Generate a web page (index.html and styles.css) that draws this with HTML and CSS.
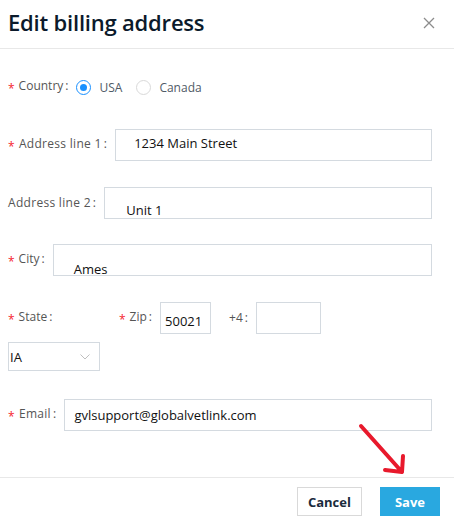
FILE: index.html
```html
<!DOCTYPE html>
<html lang="en">
<head>
  <meta charset="UTF-8">
  <title>Edit billing address</title>
  <link rel="stylesheet" href="styles.css">
</head>
<body>
  <div class="modal">
    <div class="modal-header">
      <h1 class="modal-title">Edit billing address</h1>
      <button class="close-btn" aria-label="Close">
        <svg width="12" height="12" viewBox="0 0 12 12">
          <path d="M1 1 L11 11 M11 1 L1 11" stroke="#8c8c8c" stroke-width="1.3" fill="none"/>
        </svg>
      </button>
    </div>

    <form class="modal-body">
      <div class="form-row">
        <label class="form-label required">Country</label>
        <div class="radio-group">
          <label class="radio checked"><span class="radio-dot"></span>USA</label>
          <label class="radio"><span class="radio-dot"></span>Canada</label>
        </div>
      </div>

      <div class="form-row">
        <label class="form-label label-wide required">Address line 1</label>
        <div class="field field-street">1234 Main Street</div>
      </div>

      <div class="form-row row-tight">
        <label class="form-label label-wide">Address line 2</label>
        <div class="field field-unit">Unit 1</div>
      </div>

      <div class="form-row">
        <label class="form-label required">City</label>
        <div class="field field-city">Ames</div>
      </div>

      <div class="state-row">
        <div class="state-group">
          <div class="label-box"><label class="form-label required">State</label></div>
          <div class="select">
            <span>IA</span>
            <svg width="10" height="6" viewBox="0 0 10 6">
              <path d="M0.5 0.5 L5 5 L9.5 0.5" stroke="#bfbfbf" stroke-width="1" fill="none"/>
            </svg>
          </div>
        </div>
        <div class="zip-group">
          <label class="form-label required">Zip</label>
          <div class="field field-zip">50021</div>
          <label class="form-label plus4-label">+4</label>
          <div class="field field-plus4"></div>
        </div>
      </div>

      <div class="form-row row-last">
        <label class="form-label label-wide required">Email</label>
        <div class="field field-email">gvlsupport@globalvetlink.com</div>
      </div>
    </form>

    <div class="modal-footer">
      <button class="btn btn-cancel">Cancel</button>
      <button class="btn btn-save">Save</button>
    </div>

    <!-- annotation arrow -->
    <svg class="arrow" width="60" height="62" viewBox="0 0 60 62">
      <path d="M6 6 L47 52 M30 50 L47 52 L48 36" stroke="#e8192c" stroke-width="4" stroke-linecap="round" stroke-linejoin="round" fill="none"/>
    </svg>
  </div>
</body>
</html>
```

FILE: styles.css
```css
* {
  box-sizing: border-box;
}
body {
  margin: 0;
  background: #fff;
  font-family: "Open Sans", Arial, sans-serif;
  font-size: 12px;
  color: #555;
}
.modal {
  width: 454px;
  position: relative;
}
.modal-header {
  height: 49px;
  border-bottom: 1px solid #e8e8e8;
  display: flex;
  justify-content: space-between;
  align-items: flex-start;
  padding: 7px 19px 0 8px;
}
.modal-title {
  margin: 0;
  font-size: 22px;
  line-height: 30px;
  font-weight: 600;
  letter-spacing: -0.2px;
  color: #0b1a2b;
}
.close-btn {
  display: block;
  width: 12px;
  height: 12px;
  margin-top: 10px;
  padding: 0;
  border: none;
  background: none;
  cursor: pointer;
}
.close-btn svg {
  display: block;
}
.modal-body {
  padding: 22px 22px 46px 8px;
}
.form-row {
  display: flex;
  align-items: center;
  height: 32px;
  margin-bottom: 26px;
}
.row-tight {
  margin-bottom: 25px;
}
.row-last {
  margin-bottom: 0;
}
.form-label {
  white-space: nowrap;
  line-height: 18px;
}
.label-wide {
  letter-spacing: 0.3px;
}
.form-label::after {
  content: ":";
  margin: 0 8px 0 2px;
}
.required::before {
  content: "*";
  display: inline-block;
  vertical-align: -3px;
  color: #f5222d;
  margin-right: 4px;
}
.radio-group {
  display: flex;
  align-items: center;
}
.radio {
  display: flex;
  align-items: center;
  margin-right: 14px;
  color: #4f5a66;
  cursor: pointer;
}
.radio-dot {
  width: 15px;
  height: 15px;
  border: 1px solid #d9d9d9;
  border-radius: 50%;
  margin-right: 8px;
  display: flex;
  align-items: center;
  justify-content: center;
}
.checked .radio-dot {
  border-color: #1890ff;
}
.checked .radio-dot::after {
  content: "";
  width: 7px;
  height: 7px;
  border-radius: 50%;
  background: #1890ff;
}
.field {
  flex: 1;
  height: 32px;
  border: 1px solid #d4dae0;
  font-size: 13px;
  line-height: 18px;
  color: #111;
  white-space: nowrap;
}
.field-street {
  padding: 4px 0 0 18px;
}
.field-unit {
  padding: 13px 0 0 21px;
}
.field-city {
  padding: 15px 0 0 20px;
}
.field-email {
  padding: 6px 0 0 9px;
}
.field-zip {
  flex: none;
  width: 51px;
  padding: 9px 0 0 4px;
}
.field-plus4 {
  flex: none;
  width: 65px;
}
.state-row {
  display: flex;
  align-items: flex-start;
  margin-bottom: 28px;
}
.state-group {
  width: 111px;
}
.label-box {
  height: 32px;
  display: flex;
  align-items: center;
}
.select {
  width: 92px;
  height: 29px;
  margin-top: 8px;
  border: 1px solid #d4dae0;
  display: flex;
  align-items: center;
  justify-content: space-between;
  padding: 0 9px 0 1px;
  font-size: 13px;
  color: #111;
}
.select svg {
  display: block;
}
.zip-group {
  display: flex;
  align-items: center;
  height: 32px;
}
.plus4-label {
  margin-left: 18px;
}
.modal-footer {
  border-top: 1px solid #e8e8e8;
  display: flex;
  justify-content: flex-end;
  padding: 9px 14px 0;
}
.btn {
  height: 29px;
  font-family: "Open Sans", Arial, sans-serif;
  font-size: 13px;
  font-weight: 700;
  cursor: pointer;
}
.btn-cancel {
  padding: 0 10px;
  background: #fff;
  border: 1px solid #d9d9d9;
  color: #1b2b3c;
}
.btn-save {
  margin-left: 18px;
  padding: 0 14px;
  background: #29a8e0;
  border: 1px solid #29a8e0;
  color: #fff;
}
.arrow {
  position: absolute;
  left: 355px;
  top: 420px;
  pointer-events: none;
}
```
